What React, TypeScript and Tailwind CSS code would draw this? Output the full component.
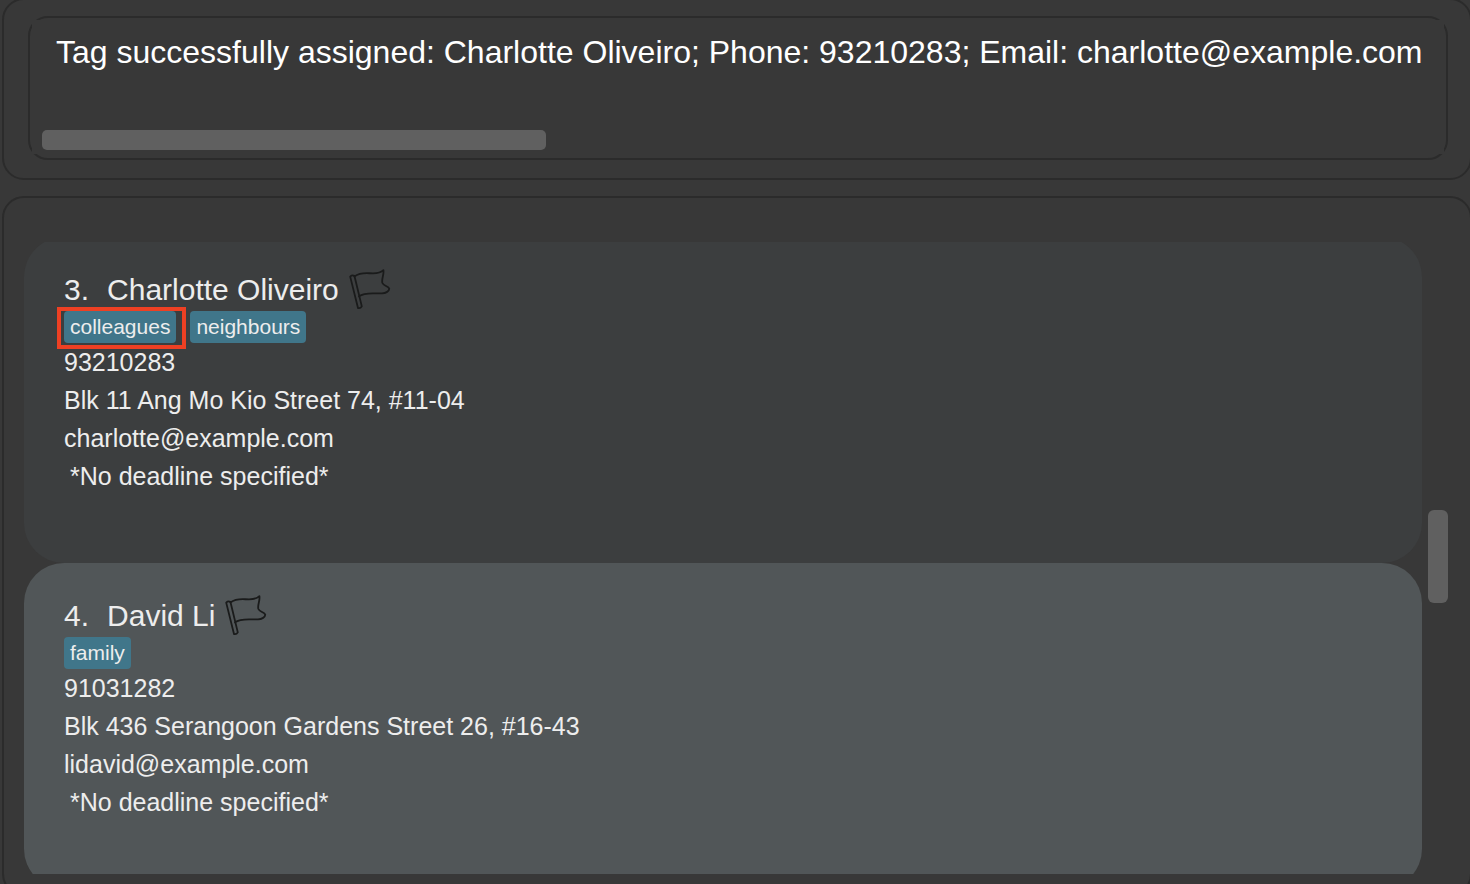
type Person = {
  index: number;
  name: string;
  tags: { label: string; highlighted?: boolean }[];
  phone: string;
  address: string;
  email: string;
  deadline: string;
};

const people: Person[] = [
  {
    index: 3,
    name: "Charlotte Oliveiro",
    tags: [{ label: "colleagues", highlighted: true }, { label: "neighbours" }],
    phone: "93210283",
    address: "Blk 11 Ang Mo Kio Street 74, #11-04",
    email: "charlotte@example.com",
    deadline: "*No deadline specified*",
  },
  {
    index: 4,
    name: "David Li",
    tags: [{ label: "family" }],
    phone: "91031282",
    address: "Blk 436 Serangoon Gardens Street 26, #16-43",
    email: "lidavid@example.com",
    deadline: "*No deadline specified*",
  },
];

function FlagIcon() {
  return (
    <svg
      viewBox="0 0 42 42"
      className="h-[42px] w-[42px] shrink-0"
      fill="none"
      stroke="#1a1b1b"
      strokeWidth="1.8"
      strokeLinejoin="round"
      strokeLinecap="round"
      aria-hidden="true"
    >
      <path d="M1.2 7.6Q3 5.8 5.4 6.8L12.8 37.4Q11.5 39.6 9 39Z" />
      <path d="M5.4 7.4C12 2.8 18 4.4 24 4.4C29 4.4 32 3.6 34.4 1.2C35.2 6 32.2 10 33.4 14C34.6 16.8 38.6 17 40.2 19.4C40.6 22.2 36.6 24.2 33 24.4C26 24.8 16 22.6 10 27.4" />
    </svg>
  );
}

function PersonCard({ person, even }: { person: Person; even: boolean }) {
  return (
    <li
      className={`h-[326px] shrink-0 rounded-[40px] pt-8 pr-10 pl-10 ${
        even ? "bg-[#515658]" : "bg-[#3c3e3f]"
      }`}
    >
      <div className="flex h-[42px] items-center gap-[10px] text-[30px] leading-[42px]">
        <h2 className="flex gap-[18px] whitespace-nowrap">
          <span>{person.index}.</span>
          <span>{person.name}</span>
        </h2>
        <FlagIcon />
      </div>
      <ul className="flex h-8 gap-[14px]">
        {person.tags.map((tag) => (
          <li
            key={tag.label}
            className="relative rounded-[4px] bg-[#40768a] px-[6px] text-[21px] leading-8"
          >
            {tag.label}
            {tag.highlighted && (
              <span className="absolute -top-1 -right-[10px] -bottom-[6px] -left-[7px] border-4 border-[#ee4023]" />
            )}
          </li>
        ))}
      </ul>
      <div className="text-[25px] leading-[38px] whitespace-nowrap">
        <p>{person.phone}</p>
        <p>{person.address}</p>
        <p>{person.email}</p>
        <p className="pl-[6px]">{person.deadline}</p>
      </div>
    </li>
  );
}

export default function App() {
  return (
    <main className="flex h-screen flex-col gap-4 overflow-hidden bg-[#383838] pl-[2px] font-['Liberation_Sans',Arial,sans-serif] text-[#ededed]">
      <section className="-mt-[2px] -mr-[2px] shrink-0 rounded-[22px] border-2 border-[#2b2b2b] pt-4 pr-[22px] pb-[18px] pl-6">
        <div className="h-36 rounded-[20px] border-2 border-[#2b2b2b] p-[2px] pb-1">
          <div className="flex h-full flex-col justify-between bg-[#383838] px-[10px] pt-3 pb-1">
            <p role="status" className="pl-[14px] text-[32px] leading-10 whitespace-nowrap text-white">
              Tag successfully assigned: Charlotte Oliveiro; Phone: 93210283; Email: charlotte@example.com
            </p>
            <div className="h-5 w-[36.2%] rounded-[5px] bg-[#606060]" />
          </div>
        </div>
      </section>
      <section className="-mr-[2px] -mb-3 flex min-h-0 flex-1 rounded-[22px] border-2 border-[#2b2b2b] pt-11 pr-[22px] pb-5 pl-5">
        <div className="min-w-0 flex-1 overflow-hidden">
          <ul className="-mt-[5px] flex flex-col">
            {people.map((person) => (
              <PersonCard key={person.index} person={person} even={person.index % 2 === 0} />
            ))}
          </ul>
        </div>
        <div className="ml-[6px] w-5 pt-[268px]">
          <div className="h-[93px] rounded-[6px] bg-[#606060]" />
        </div>
      </section>
    </main>
  );
}
